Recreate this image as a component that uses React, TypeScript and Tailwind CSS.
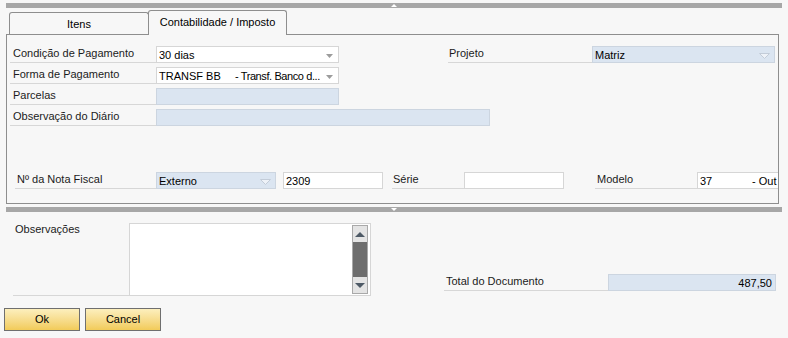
import React from 'react';

const Caret = () => (
  <svg width="7" height="4" viewBox="0 0 7 4" className="shrink-0">
    <path d="M0 0h7L3.5 4z" fill="#9c9c9c" />
  </svg>
);

const FaintCaret = () => (
  <svg width="11" height="6" viewBox="0 0 11 6" className="shrink-0">
    <path d="M0.5 0.5h10L5.5 5.5z" fill="#eef2f8" stroke="#c3ccd8" strokeWidth="1" />
  </svg>
);

const Label = ({ text, className }: { text: string; className: string }) => (
  <div className={`h-[17px] border-b border-[#d7d7d7] leading-[14px] text-[#1b1b1b] whitespace-nowrap ${className}`}>
    {text}
  </div>
);

const WhiteField = ({ className, children }: { className: string; children?: React.ReactNode }) => (
  <div className={`h-[17px] border border-[#d6d6d6] bg-white flex items-center pl-[2px] pt-[2px] whitespace-nowrap overflow-hidden ${className}`}>
    {children}
  </div>
);

const BlueField = ({ className, children }: { className: string; children?: React.ReactNode }) => (
  <div className={`h-[17px] border border-[#ccd5e0] bg-[#dbe5f1] flex items-center pl-[2px] pt-[2px] whitespace-nowrap overflow-hidden ${className}`}>
    {children}
  </div>
);

const Splitter = ({ up }: { up: boolean }) => (
  <div className="ml-[6px] w-[776px] h-[5px] bg-[#a7a7a7] flex items-center justify-center">
    {up ? (
      <div className="w-0 h-0 border-x-[3px] border-x-transparent border-b-[3px] border-b-white" />
    ) : (
      <div className="w-0 h-0 border-x-[3px] border-x-transparent border-t-[3px] border-t-white" />
    )}
  </div>
);

export default function App() {
  return (
    <div className="w-[788px] h-[338px] overflow-hidden bg-[#f7f7f7] text-[11px] text-black font-['Liberation_Sans',Arial,sans-serif]">
      <div className="pt-[3px]">
        <Splitter up />
      </div>

      {/* tabs */}
      <div className="h-[26px] flex items-end pl-[9px]">
        <div className="w-[140px] h-[22px] border border-b-0 border-[#8e8e8e] rounded-t-[3px] flex items-center justify-center pt-[2px]">
          Itens
        </div>
        <div className="relative z-10 -ml-px -mb-px w-[139px] h-[25px] border border-b-0 border-[#8e8e8e] rounded-t-[3px] bg-[#f7f7f7] flex items-center justify-center pb-[2px]">
          Contabilidade / Imposto
        </div>
      </div>

      {/* panel */}
      <div className="ml-[6px] w-[773px] h-[170px] border border-[#8e8e8e] overflow-hidden pt-[11px]">
        <div className="flex flex-col gap-[4px] pl-[3px]">
          <div className="flex">
            <Label text="Condição de Pagamento" className="w-[146px] pl-[3px]" />
            <WhiteField className="w-[183px] justify-between pr-[5px]">
              <span>30 dias</span>
              <Caret />
            </WhiteField>
            <Label text="Projeto" className="ml-[109px] w-[144px] pl-[1px]" />
            <BlueField className="w-[183px] justify-between pr-[4px]">
              <span>Matriz</span>
              <FaintCaret />
            </BlueField>
          </div>
          <div className="flex">
            <Label text="Forma de Pagamento" className="w-[146px] pl-[3px]" />
            <WhiteField className="w-[183px] justify-between pr-[5px]">
              <span className="flex">
                <span className="w-[76px]">TRANSF BB</span>
                <span className="tracking-[-0.4px]">- Transf. Banco d...</span>
              </span>
              <Caret />
            </WhiteField>
          </div>
          <div className="flex">
            <Label text="Parcelas" className="w-[146px] pl-[3px]" />
            <BlueField className="w-[183px]" />
          </div>
          <div className="flex">
            <Label text="Observação do Diário" className="w-[146px] pl-[3px]" />
            <BlueField className="w-[334px]" />
          </div>

          <div className="flex mt-[42px]">
            <Label text="Nº da Nota Fiscal" className="ml-[5px] w-[141px] pl-[2px]" />
            <BlueField className="w-[120px] justify-between pr-[4px]">
              <span>Externo</span>
              <FaintCaret />
            </BlueField>
            <WhiteField className="ml-[7px] w-[100px]">2309</WhiteField>
            <Label text="Série" className="ml-[9px] w-[72px] pl-[1px]" />
            <WhiteField className="w-[100px]" />
            <Label text="Modelo" className="ml-[31px] w-[102px] pl-[2px]" />
            <WhiteField className="w-[81px] border-r-0">
              <span className="w-[52px]">37</span>
              <span>- Out</span>
            </WhiteField>
          </div>
        </div>
      </div>

      <div className="pt-[3px]">
        <Splitter up={false} />
      </div>

      {/* observações + total */}
      <div className="flex items-start mt-[11px]">
        <div className="ml-[13px] w-[116px] h-[73px] border-b border-[#d7d7d7] pl-[2px] leading-[13px] text-[#1b1b1b]">
          Observações
        </div>
        <div className="w-[242px] h-[73px] border border-[#d6d6d6] bg-white flex justify-end items-center pr-[2px]">
          <div className="w-[16px] h-[69px] border border-[#a9a9a9] flex flex-col">
            <div className="h-[16px] bg-[#e4e4e4] flex items-center justify-center">
              <div className="w-0 h-0 border-x-[5px] border-x-transparent border-b-[5px] border-b-[#4e5a66]" />
            </div>
            <div className="flex-1 bg-[#6e6e6e]" />
            <div className="h-[16px] bg-[#e4e4e4] flex items-center justify-center">
              <div className="w-0 h-0 border-x-[5px] border-x-transparent border-t-[5px] border-t-[#4e5a66]" />
            </div>
          </div>
        </div>
        <div className="flex mt-[51px] ml-[73px]">
          <Label text="Total do Documento" className="w-[164px] pl-[2px]" />
          <BlueField className="w-[168px] justify-end pr-[3px]">487,50</BlueField>
        </div>
      </div>

      {/* buttons */}
      <div className="flex mt-[12px] ml-[4px] gap-[5px]">
        {['Ok', 'Cancel'].map((t) => (
          <button
            key={t}
            className="w-[76px] h-[23px] border border-[#6f6f6f] bg-gradient-to-b from-[#fcefbd] to-[#f2cb58] flex items-center justify-center text-black"
          >
            {t}
          </button>
        ))}
      </div>
    </div>
  );
}
